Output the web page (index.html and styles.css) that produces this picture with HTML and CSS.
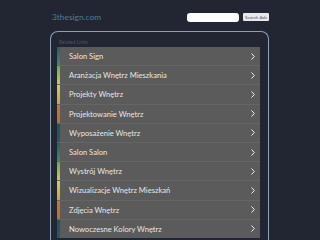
FILE: index.html
```html
<!DOCTYPE html>
<html>
<head>
<meta charset="utf-8">
<link rel="stylesheet" href="styles.css">
</head>
<body>
<header class="top">
  <div class="logo">3thesign.com</div>
  <div class="search">
    <span class="search-input"></span>
    <span class="search-btn">Search Ads</span>
  </div>
</header>
<section class="panel">
  <div class="panel-title">Related Links</div>
  <ul class="links">
    <li class="c1"><span>Salon Sign</span><svg viewBox="0 0 4 7"><path d="M0.5 0.5L3.3 3.5L0.5 6.5"/></svg></li>
    <li class="c2"><span>Aranżacja Wnętrz Mieszkania</span><svg viewBox="0 0 4 7"><path d="M0.5 0.5L3.3 3.5L0.5 6.5"/></svg></li>
    <li class="c3"><span>Projekty Wnętrz</span><svg viewBox="0 0 4 7"><path d="M0.5 0.5L3.3 3.5L0.5 6.5"/></svg></li>
    <li class="c4"><span>Projektowanie Wnętrz</span><svg viewBox="0 0 4 7"><path d="M0.5 0.5L3.3 3.5L0.5 6.5"/></svg></li>
    <li class="c5"><span>Wyposażenie Wnętrz</span><svg viewBox="0 0 4 7"><path d="M0.5 0.5L3.3 3.5L0.5 6.5"/></svg></li>
    <li class="c1"><span>Salon Salon</span><svg viewBox="0 0 4 7"><path d="M0.5 0.5L3.3 3.5L0.5 6.5"/></svg></li>
    <li class="c2"><span>Wystrój Wnętrz</span><svg viewBox="0 0 4 7"><path d="M0.5 0.5L3.3 3.5L0.5 6.5"/></svg></li>
    <li class="c3"><span>Wizualizacje Wnętrz Mieszkań</span><svg viewBox="0 0 4 7"><path d="M0.5 0.5L3.3 3.5L0.5 6.5"/></svg></li>
    <li class="c4"><span>Zdjęcia Wnętrz</span><svg viewBox="0 0 4 7"><path d="M0.5 0.5L3.3 3.5L0.5 6.5"/></svg></li>
    <li class="c5"><span>Nowoczesne Kolory Wnętrz</span><svg viewBox="0 0 4 7"><path d="M0.5 0.5L3.3 3.5L0.5 6.5"/></svg></li>
  </ul>
</section>
</body>
</html>
```
FILE: styles.css
```css
html, body {
  margin: 0;
  padding: 0;
  background: #212632;
  font-family: "Lato", "Open Sans", sans-serif;
  overflow: hidden;
  width: 320px;
  height: 240px;
}
.top {
  display: flex;
  justify-content: space-between;
  align-items: center;
  padding: 11px 51px 0 52px;
  height: 12px;
}
.logo {
  color: #4f7d99;
  font-size: 8.4px;
}
.search {
  display: flex;
  align-items: center;
  gap: 4px;
}
.search-input {
  display: block;
  width: 52px;
  height: 9px;
  background: #fff;
  border-radius: 3px;
}
.search-btn {
  display: block;
  white-space: nowrap;
  background: #e9e9e9;
  color: #555;
  font-size: 4.6px;
  line-height: 8px;
  width: 26px;
  text-align: center;
  border-radius: 1px;
}
.panel {
  margin: 8px 51px 0 50px;
  border: 1.5px solid #8d9db4;
  border-bottom: none;
  border-radius: 8px 8px 0 0;
  padding: 6px 8px 0 6px;
  height: 207px;
  overflow: hidden;
}
.panel-title {
  color: #4d5668;
  font-size: 5px;
  line-height: 8px;
  padding-left: 2px;
}
.links {
  list-style: none;
  margin: 1px 0 0;
  padding: 0;
  display: flex;
  flex-direction: column;
  gap: 1px;
  background: #656565;
}
.links li {
  display: flex;
  align-items: center;
  justify-content: space-between;
  flex: none;
  height: 18.2px;
  background: #5b5b5b;
  border-left: 3px solid #3d8d6d;
  padding: 0 5px 0 9px;
  color: #e6e6e6;
  font-size: 7.6px;
}
.links li svg {
  width: 4px;
  height: 7px;
  fill: none;
  stroke: #f0f0f0;
  stroke-width: 1;
}
.links li.c1 { border-image: linear-gradient(#1f5d63, #3f9070) 1; }
.links li.c2 { border-image: linear-gradient(#6ea44d, #d0d04a) 1; }
.links li.c3 { border-image: linear-gradient(#d6d24c, #c8a43a) 1; }
.links li.c4 { border-image: linear-gradient(#c5792e, #c06a2a) 1; }
.links li.c5 { border-image: linear-gradient(#1c5260, #1f5b66) 1; }
```
